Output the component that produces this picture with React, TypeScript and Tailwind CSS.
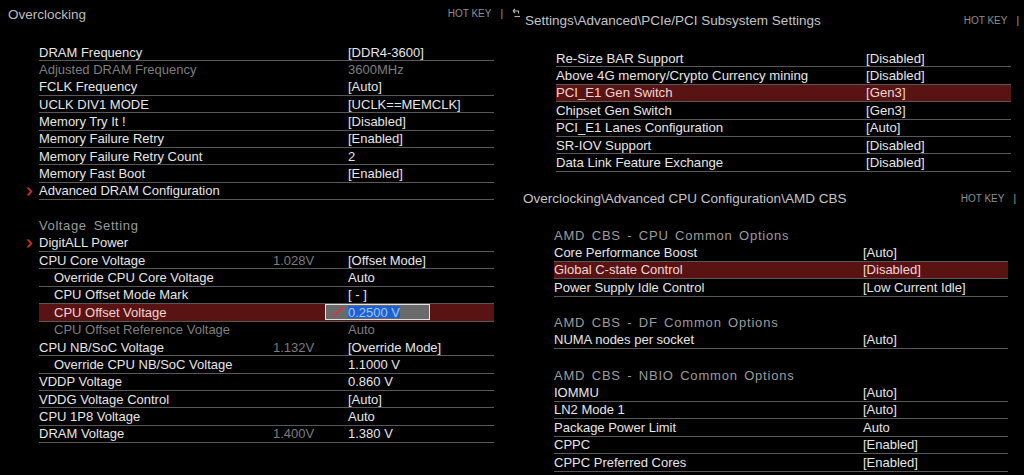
import React from "react";

type Item = {
  label?: string;
  mid?: string;
  value?: string;
  indent?: boolean;
  disabled?: boolean;
  chevron?: boolean;
  selected?: boolean;
  input?: string;
  kind?: "row" | "header" | "spacer";
};

const leftItems: Item[] = [
  { label: "DRAM Frequency", value: "[DDR4-3600]" },
  { label: "Adjusted DRAM Frequency", value: "3600MHz", disabled: true },
  { label: "FCLK Frequency", value: "[Auto]" },
  { label: "UCLK DIV1 MODE", value: "[UCLK==MEMCLK]" },
  { label: "Memory Try It !", value: "[Disabled]" },
  { label: "Memory Failure Retry", value: "[Enabled]" },
  { label: "Memory Failure Retry Count", value: "2" },
  { label: "Memory Fast Boot", value: "[Enabled]" },
  { label: "Advanced DRAM Configuration", chevron: true },
  { kind: "spacer" },
  { kind: "header", label: "Voltage Setting" },
  { label: "DigitALL Power", chevron: true },
  { label: "CPU Core Voltage", mid: "1.028V", value: "[Offset Mode]" },
  { label: "Override CPU Core Voltage", value: "Auto", indent: true },
  { label: "CPU Offset Mode Mark", value: "[ - ]", indent: true },
  { label: "CPU Offset Voltage", indent: true, selected: true, input: "0.2500 V" },
  { label: "CPU Offset Reference Voltage", value: "Auto", indent: true, disabled: true },
  { label: "CPU NB/SoC Voltage", mid: "1.132V", value: "[Override Mode]" },
  { label: "Override CPU NB/SoC Voltage", value: "1.1000 V", indent: true },
  { label: "VDDP Voltage", value: "0.860 V" },
  { label: "VDDG Voltage Control", value: "[Auto]" },
  { label: "CPU 1P8 Voltage", value: "Auto" },
  { label: "DRAM Voltage", mid: "1.400V", value: "1.380 V" },
];

const pcieItems: Item[] = [
  { label: "Re-Size BAR Support", value: "[Disabled]" },
  { label: "Above 4G memory/Crypto Currency mining", value: "[Disabled]" },
  { label: "PCI_E1 Gen Switch", value: "[Gen3]", selected: true },
  { label: "Chipset Gen Switch", value: "[Gen3]" },
  { label: "PCI_E1 Lanes Configuration", value: "[Auto]" },
  { label: "SR-IOV Support", value: "[Disabled]" },
  { label: "Data Link Feature Exchange", value: "[Disabled]" },
];

const cbsItems: Item[] = [
  { kind: "header", label: "AMD CBS - CPU Common Options" },
  { label: "Core Performance Boost", value: "[Auto]" },
  { label: "Global C-state Control", value: "[Disabled]", selected: true },
  { label: "Power Supply Idle Control", value: "[Low Current Idle]" },
  { kind: "spacer" },
  { kind: "header", label: "AMD CBS - DF Common Options" },
  { label: "NUMA nodes per socket", value: "[Auto]" },
  { kind: "spacer" },
  { kind: "header", label: "AMD CBS - NBIO Common Options" },
  { label: "IOMMU", value: "[Auto]" },
  { label: "LN2 Mode 1", value: "[Auto]" },
  { label: "Package Power Limit", value: "Auto" },
  { label: "CPPC", value: "[Enabled]" },
  { label: "CPPC Preferred Cores", value: "[Enabled]" },
];

const Chevron = () => (
  <svg width="7" height="9" viewBox="0 0 7 9" className="block">
    <path d="M0.5 0.5 L3 0.5 L6.5 4.5 L3 8.5 L0.5 8.5 L4 4.5 Z" fill="#c8302c" />
  </svg>
);

const BackIcon = () => (
  <svg width="9" height="10" viewBox="0 0 9 10" className="block self-start mt-[8px]" fill="none" stroke="#b0b0b0" strokeWidth="1.1">
    <path d="M1 3 L3 1 M1 3 L3 5 M1 3 H6.5 V5.5" />
    <path d="M2.5 8.5 H8" />
  </svg>
);

const HotKey = ({ className = "" }: { className?: string }) => (
  <div className={`flex items-center gap-[9px] text-[10px] text-[#8e8e8e] leading-none ${className}`}>
    <span>HOT KEY</span>
    <span className="text-[#a0a0a0]">|</span>
  </div>
);

const LeftRow = ({ item }: { item: Item }) => {
  if (item.kind === "spacer") return <div className="h-[17.35px]" />;
  if (item.kind === "header")
    return (
      <div className="h-[17.35px] flex items-start pt-[2px] pl-[13px] text-[#9a9a9a] tracking-[0.6px] [word-spacing:3px]">
        {item.label}
      </div>
    );
  const line = item.disabled ? "border-transparent" : "border-[#585858]";
  const text = item.disabled ? "text-[#7e7e7e]" : item.selected ? "text-[#f2d6d6]" : "text-[#e6e6e6]";
  return (
    <div className="flex h-[17.35px]">
      <div className="w-[13px] flex items-center">{item.chevron && <Chevron />}</div>
      <div className={`flex-1 flex items-center border-b ${line} ${item.selected ? "bg-[#5a1313]" : ""} ${text}`}>
        <div className={`w-[234px] ${item.indent ? "pl-[15px]" : ""}`}>{item.label}</div>
        {item.input ? (
          <div className="ml-[52px] w-[105px] h-[16px] border border-[#e2e2e2] bg-[#6a6a6a] flex items-center">
            <svg width="12" height="12" viewBox="0 0 12 12" className="ml-[6px]">
              <path d="M1.5 10.5 L10.5 1.5" stroke="#e0303a" strokeWidth="1.6" strokeLinecap="round" />
            </svg>
            <span className="ml-[4px] bg-[#1f5fd4] text-[#9fc9ff] h-[12px] flex items-center">{item.input}</span>
          </div>
        ) : (
          <>
            <div className="w-[75px] text-[#7c7c7c]">{item.mid}</div>
            <div className="flex-1">{item.value}</div>
          </>
        )}
      </div>
    </div>
  );
};

const RightRow = ({ item, h, labelW }: { item: Item; h: string; labelW: string }) => {
  if (item.kind === "spacer") return <div className={h} />;
  if (item.kind === "header")
    return (
      <div className={`${h} flex items-center text-[#9c9c9c] tracking-[0.8px] [word-spacing:2px]`}>{item.label}</div>
    );
  return (
    <div
      className={`${h} flex items-center border-b border-[#585858] ${
        item.selected ? "bg-[#5a1313] text-[#f2d6d6]" : "text-[#e6e6e6]"
      }`}
    >
      <div className={labelW}>{item.label}</div>
      <div className="flex-1">{item.value}</div>
    </div>
  );
};

export default function App() {
  return (
    <div className="w-[1024px] h-[475px] bg-black overflow-hidden flex font-['Liberation_Sans',Arial,sans-serif] text-[13px] leading-none">
      {/* left: overclocking */}
      <div className="w-[510px] flex flex-col">
        <div className="h-[30px] flex items-center justify-between pl-[8px] pr-[7px]">
          <span className="text-[13.5px] text-[#bdbdbd]">Overclocking</span>
          <HotKey className="-mt-[2px]" />
        </div>
        <div className="mt-[14px] ml-[26px] w-[468px]">
          {leftItems.map((it, i) => (
            <LeftRow key={i} item={it} />
          ))}
        </div>
      </div>

      {/* right */}
      <div className="flex-1 flex flex-col">
        <div className="h-[185px] flex flex-col">
          <div className="h-[42px] flex items-center pl-[2px] pr-[5px]">
            <BackIcon />
            <span className="ml-[4px] text-[13.5px] text-[#c4c4c4]">Settings\Advanced\PCIe/PCI Subsystem Settings</span>
            <HotKey className="ml-auto -mt-[1px]" />
          </div>
          <div className="mt-[8px] ml-[46px] w-[455px] text-[13.2px]">
            {pcieItems.map((it, i) => (
              <RightRow key={i} item={it} h="h-[17.4px]" labelW="w-[310px]" />
            ))}
          </div>
        </div>
        <div className="flex flex-col">
          <div className="h-[28px] flex items-center pl-[13px] pr-[8px]">
            <span className="text-[13.5px] text-[#c4c4c4]">Overclocking\Advanced CPU Configuration\AMD CBS</span>
            <HotKey className="ml-auto" />
          </div>
          <div className="mt-[13.5px] ml-[44px] w-[454px]">
            {cbsItems.map((it, i) => (
              <RightRow key={i} item={it} h="h-[17.5px]" labelW="w-[309px]" />
            ))}
          </div>
        </div>
      </div>
    </div>
  );
}
